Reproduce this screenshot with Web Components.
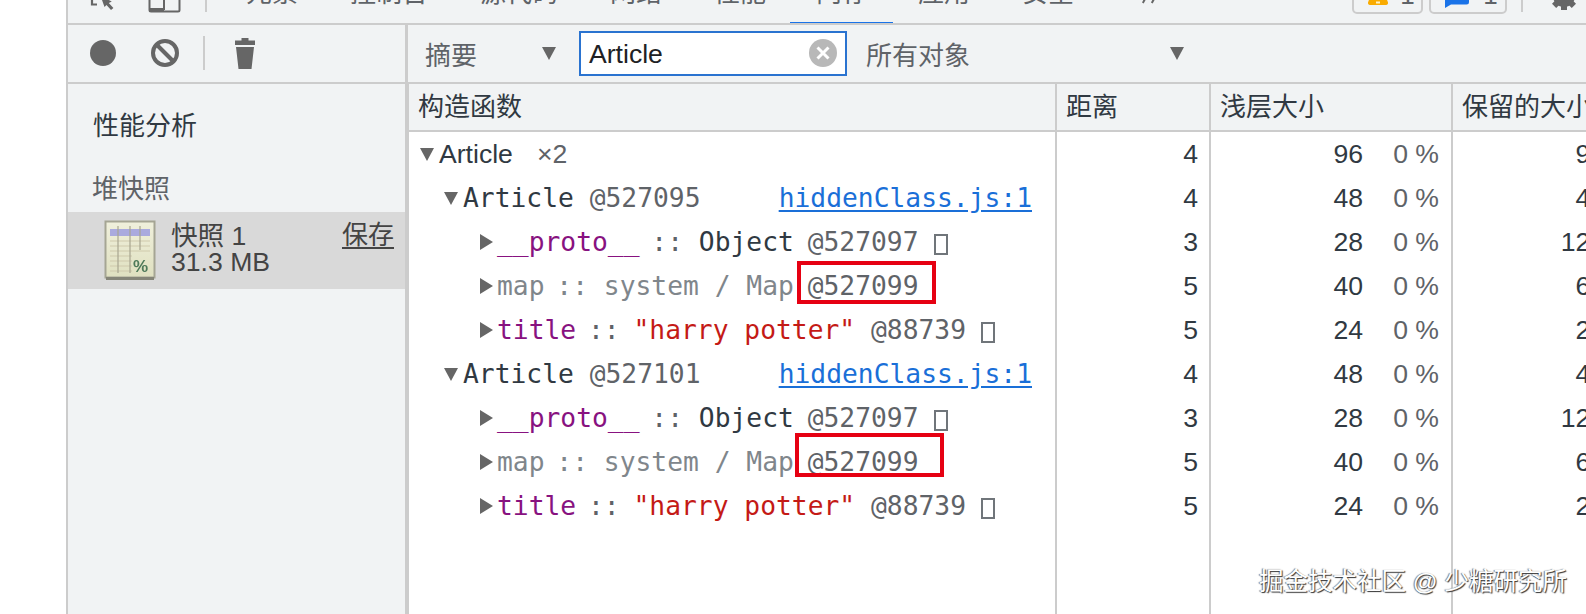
<!DOCTYPE html>
<html lang="zh">
<head>
<meta charset="utf-8">
<title>内存</title>
<style>
html, body {
  margin: 0;
  height: 614px;
  overflow: hidden;
  background: #fff;
  font-family: "Liberation Sans", "Noto Sans CJK SC", sans-serif;
}
body { position: relative; }

/* parts of a heap row, passed in through the slot */
.mono { font-family: "DejaVu Sans Mono", "Noto Sans CJK SC", monospace; font-size: 26.300px; }
.name { color: #303942; }
.id { color: #5f6368; }
.proto { color: #881280; }
.sys { color: #80868b; }
.key { color: #881280; }
.sep { color: #5f6368; }
.str { color: #c41a16; }
.times { color: #5f6368; margin-left: 24px; }
.tight { margin-left: -4px; }
.after { margin-left: -2px; }
.tofu {
  display: inline-block;
  width: 10px;
  height: 17px;
  margin-left: 15px;
  border: 2px solid #70757a;
  vertical-align: -4px;
}
</style>
</head>
<body>

<template id="shell-tpl">
  <style>
    :host {
      display: flex;
      flex-direction: column;
      height: 614px;
      margin-left: 66px;
      border-left: 2px solid #ccc;
      background: #f1f3f4;
      overflow: hidden;
    }
    .main { flex: 1; display: grid; grid-template-columns: 340px 1fr; min-height: 0; }
    .side { border-right: 3px solid #ccc; min-width: 0; }
    .work { display: flex; flex-direction: column; min-width: 0; }
  </style>
  <slot name="tabs"></slot>
  <div class="main">
    <div class="side"><slot name="side"></slot></div>
    <div class="work"><slot></slot></div>
  </div>
</template>

<template id="tabbar-tpl">
  <style>
    :host {
      display: flex;
      align-items: flex-start;
      box-sizing: border-box;
      height: 25px;
      padding-left: 22px;
      border-bottom: 2px solid #ccc;
      overflow: hidden;
      color: #5f6368;
      font-size: 26px;
    }
    svg { display: block; flex: none; }
    .inspect { margin-right: 28px; }
    .rule { flex: none; width: 2px; height: 12px; margin: 0 13px 0 24px; background: #ccc; }
    .more { margin-left: 42px; }
    .counts { display: flex; margin-left: 195px; }
    .count {
      box-sizing: border-box;
      display: flex;
      height: 24px;
      margin-top: -10px;
      border: 2px solid #ccc;
      border-radius: 5px;
      line-height: 24px;
    }
    .count svg { margin-top: 8px; }
    .count span { margin-top: -9px; }
    .warn { width: 71px; margin-right: 6px; padding-left: 14px; }
    .warn span { margin-left: 12px; }
    .msg { width: 78px; padding-left: 14px; }
    .msg span { margin-left: 14px; }
    .rule2 { flex: none; width: 2px; height: 12px; margin: 0 27px 0 14px; background: #ccc; }
  </style>
  <svg class="inspect" width="30" height="12" viewBox="0 0 30 12">
    <path d="M2 0v4.500h5" fill="none" stroke="#666" stroke-width="2.200"/>
    <path d="M12 0l2.500 7 2-2 4.500 5 2.400-2-4.600-5 3-1.600-3-1.400z" fill="#666"/>
  </svg>
  <svg width="33" height="13" viewBox="0 0 33 13">
    <path d="M1.500 0v10a1.500 1.500 0 0 0 1.500 1.500h27a1.500 1.500 0 0 0 1.500-1.500V0" fill="none" stroke="#666" stroke-width="2"/>
    <rect x="1" y="8" width="15" height="4" fill="#666"/>
    <rect x="15" y="0" width="2" height="10" fill="#666"/>
  </svg>
  <div class="rule"></div>
  <slot></slot>
  <svg class="more" width="15" height="4" viewBox="0 0 15 4">
    <path d="M3 -1L0.800 3M12 -1L9.800 3" fill="none" stroke="#666" stroke-width="2"/>
  </svg>
  <div class="counts">
    <div class="count warn">
      <svg width="20" height="5" viewBox="0 0 20 5"><path d="M2 -3h16l2 5.500a2 2 0 0 1-2 2.500H2a2 2 0 0 1-2-2.500z" fill="#f9ab00"/><rect x="8" y="1.500" width="4" height="2" fill="#fff3c8"/></svg>
      <span>1</span>
    </div>
    <div class="count msg">
      <svg width="24" height="8" viewBox="0 0 24 8"><path d="M0 -3h24v5a2.500 2.500 0 0 1-2.500 2.500H6L0 8z" fill="#1a73e8"/></svg>
      <span>1</span>
    </div>
  </div>
  <div class="rule2"></div>
  <svg width="28" height="11" viewBox="0 0 28 11">
    <g fill="#666" transform="translate(14 -4)">
      <circle r="11"/>
      <rect x="-3" y="-14" width="6" height="28"/>
      <rect x="-3" y="-14" width="6" height="28" transform="rotate(45)"/>
      <rect x="-3" y="-14" width="6" height="28" transform="rotate(90)"/>
      <rect x="-3" y="-14" width="6" height="28" transform="rotate(135)"/>
    </g>
  </svg>
</template>

<template id="tab-tpl">
  <style>
    :host {
      display: block;
      flex: none;
      box-sizing: border-box;
      height: 23px;
      padding: 0 26px;
      white-space: nowrap;
    }
    :host([active]) { margin-left: -2px; margin-right: -1px; padding: 0 25px 0 26px; box-shadow: inset 0 -3px #1a73e8; height: 25px; }
    div { margin-top: -20px; line-height: 26px; }
  </style>
  <div><slot></slot></div>
</template>

<template id="side-tpl">
  <style>
    :host { display: block; }
    .bar {
      display: flex;
      align-items: center;
      box-sizing: border-box;
      height: 59px;
      padding: 0 0 1px 22px;
      border-bottom: 2px solid #ccc;
    }
    svg { display: block; flex: none; }
    .clear { margin-left: 35px; }
    .rule { width: 2px; height: 34px; margin: 0 30px 0 24px; background: #ccc; }
    .title { margin: 27px 0 0 25px; font-size: 26px; line-height: 30px; color: #303942; }
    .group { margin: 33px 0 8px 24px; font-size: 26px; line-height: 30px; color: #5f6368; }
  </style>
  <div class="bar">
    <svg width="26" height="26" viewBox="0 0 26 26"><circle cx="13" cy="13" r="13" fill="#666"/></svg>
    <svg class="clear" width="28" height="28" viewBox="0 0 28 28"><circle cx="14" cy="14" r="12" fill="none" stroke="#666" stroke-width="4"/><path d="M6 6l16 16" stroke="#666" stroke-width="4"/></svg>
    <div class="rule"></div>
    <svg width="20" height="31" viewBox="0 0 20 31"><path d="M6.500 2.500V0h7v2.500H20V7H0V2.500zM1 9h18l-2.500 22h-13z" fill="#666"/></svg>
  </div>
  <div class="title">性能分析</div>
  <div class="group">堆快照</div>
  <slot></slot>
</template>

<template id="snapshot-tpl">
  <style>
    :host {
      display: flex;
      box-sizing: border-box;
      height: 77px;
      padding-left: 36px;
      background: #d9d9d9;
      color: #444;
      font-size: 26.600px;
      line-height: 26px;
    }
    svg { display: block; flex: none; margin-top: 8px; filter: blur(.6px); }
    .info { margin: 11px 0 0 15px; flex: 1; }
    .save { margin: 10px 11px 0 0; font-size: 26px; text-decoration: underline; text-underline-offset: 3px; }
  </style>
  <svg width="52" height="61" viewBox="0 0 52 61">
    <defs>
      <linearGradient id="sheet" x1="0" y1="0" x2="0" y2="1">
        <stop offset="0" stop-color="#f0f0dc"/>
        <stop offset="1" stop-color="#dfe0c0"/>
      </linearGradient>
    </defs>
    <rect x="1.500" y="1.500" width="49" height="56" fill="url(#sheet)" stroke="#a5a594" stroke-width="2"/>
    <rect x="2" y="57" width="48" height="3" fill="#858578"/>
    <rect x="6" y="9" width="40" height="7" fill="#aaaade"/>
    <g stroke="#cfc9ab" stroke-width="1.200">
      <path d="M6 21h40M6 26h40M6 31h40M6 36h22M6 41h22M6 46h22M6 51h22"/>
    </g>
    <path d="M14 6v47M26 6v47M36 6v24" stroke="#a8a690" stroke-width="1.200"/>
    <text x="29" y="52" font-family="Liberation Sans, sans-serif" font-size="17" font-weight="700" fill="#4f7a5a">%</text>
  </svg>
  <div class="info"><slot></slot></div>
  <div class="save">保存</div>
</template>

<template id="filter-tpl">
  <style>
    :host {
      display: flex;
      align-items: center;
      box-sizing: border-box;
      height: 59px;
      padding: 0 0 1px 17px;
      border-bottom: 2px solid #ccc;
      color: #5f6368;
      font-size: 26px;
    }
    i { flex: none; width: 0; height: 0; border: 7px solid transparent; border-top: 13px solid #666; border-bottom: 0; }
    .a1 { margin-left: 65px; }
    .search {
      flex: none;
      display: flex;
      align-items: center;
      justify-content: space-between;
      box-sizing: border-box;
      width: 268px;
      height: 45px;
      margin: 0 19px 0 23px;
      padding: 0 8px;
      border: 2px solid #2a73d0;
      background: #fff;
      color: #202124;
      font-size: 26.600px;
    }
    .search span { padding-top: 3px; }
    .a2 { margin-left: 200px; }
    svg { display: block; }
  </style>
  <span>摘要</span>
  <i class="a1"></i>
  <div class="search">
    <span>Article</span>
    <svg width="28" height="28" viewBox="0 0 28 28"><circle cx="14" cy="14" r="14" fill="#b8b8b8"/><path d="M8.500 8.500l11 11M19.500 8.500l-11 11" stroke="#fff" stroke-width="3"/></svg>
  </div>
  <span>所有对象</span>
  <i class="a2"></i>
</template>

<template id="table-tpl">
  <style>
    :host {
      display: flex;
      flex-direction: column;
      flex: 1;
      min-height: 0;
      border-left: 1px solid #ccc;
      background: #fff;
      overflow: hidden;
    }
    .head {
      display: grid;
      grid-template-columns: 646px 154px 242px 320px;
      box-sizing: border-box;
      height: 48px;
      border-bottom: 2px solid #ccc;
      background: #f1f3f4;
      color: #303942;
      font-size: 26px;
      line-height: 47px;
    }
    .head div { padding-left: 9px; white-space: nowrap; }
    .head div + div { border-left: 2px solid #ccc; }
  </style>
  <div class="head">
    <div>构造函数</div><div>距离</div><div>浅层大小</div><div>保留的大小</div>
  </div>
  <slot></slot>
</template>

<template id="row-tpl">
  <style>
    :host {
      display: grid;
      grid-template-columns: 646px 154px 242px 320px;
      height: 44px;
      color: #303942;
      font-size: 26.600px;
      line-height: 44px;
    }
    :host([fill]) { flex: 1; }
    .c { display: flex; box-sizing: border-box; white-space: nowrap; }
    .c + .c { border-left: 2px solid #ccc; justify-content: flex-end; }
    .tree { align-items: center; padding-right: 23px; }
    .tw { flex: none; width: 0; height: 0; border-style: solid; border-color: transparent; }
    :host([open]) .tw { margin-right: 5px; border-width: 13px 7.500px 0; border-top-color: #666; }
    :host([closed]) .tw { margin-right: 4px; border-width: 8px 0 8px 13px; border-left-color: #666; }
    :host([fill]) .tw { display: none; }
    .dist { padding-right: 11px; }
    .size { padding-right: 12px; }
    .size b { font-weight: 400; width: 76px; text-align: right; color: #5f6368; }
    .keep { padding-right: 166px; }
  </style>
  <div class="c tree"><div class="tw"></div><slot></slot></div>
  <div class="c dist"></div>
  <div class="c size"><span class="sv"></span><b></b></div>
  <div class="c keep"></div>
</template>

<template id="mark-tpl">
  <style>
    :host { position: absolute; box-sizing: border-box; border: 4px solid #e60012; }
  </style>
</template>

<template id="mark-text-tpl">
  <style>
    :host {
      position: absolute;
      right: 19px;
      bottom: 17px;
      color: #fff;
      font-size: 24.500px;
      line-height: 30px;
      white-space: nowrap;
      text-shadow: 1px 1px 1px #333, -1px 0 1px #777;
    }
  </style>
  <slot></slot>
</template>

<dev-shell>
  <dev-tabbar slot="tabs">
    <dev-tab>元素</dev-tab>
    <dev-tab>控制台</dev-tab>
    <dev-tab>源代码</dev-tab>
    <dev-tab>网络</dev-tab>
    <dev-tab>性能</dev-tab>
    <dev-tab active>内存</dev-tab>
    <dev-tab>应用</dev-tab>
    <dev-tab>安全</dev-tab>
  </dev-tabbar>

  <profile-side slot="side">
    <snapshot-item>快照 1<br>31.3 MB</snapshot-item>
  </profile-side>

  <heap-filter></heap-filter>
  <heap-table>
    <heap-row open indent="11" dist="4" size="96" keep="96"><span class="name">Article</span><span class="times">×2</span></heap-row>
    <heap-row open indent="35" dist="4" size="48" keep="48"><span class="mono"><span class="name">Article</span> <span class="id">@527095</span></span><a-link>hiddenClass.js:1</a-link></heap-row>
    <heap-row closed indent="71" dist="3" size="28" keep="128"><span class="mono"><span class="proto">__proto__</span> <span class="sep tight">::</span> <span class="name">Object</span> <span class="id after">@527097</span><span class="tofu"></span></span></heap-row>
    <heap-row closed indent="71" dist="5" size="40" keep="64"><span class="mono"><span class="sys">map <span class="tight">:: system / Map</span></span> <span class="id after">@527099</span></span></heap-row>
    <heap-row closed indent="71" dist="5" size="24" keep="24"><span class="mono"><span class="key">title</span> <span class="sep tight">::</span> <span class="str after">"harry potter"</span> <span class="id">@88739</span><span class="tofu"></span></span></heap-row>
    <heap-row open indent="35" dist="4" size="48" keep="48"><span class="mono"><span class="name">Article</span> <span class="id">@527101</span></span><a-link>hiddenClass.js:1</a-link></heap-row>
    <heap-row closed indent="71" dist="3" size="28" keep="128"><span class="mono"><span class="proto">__proto__</span> <span class="sep tight">::</span> <span class="name">Object</span> <span class="id after">@527097</span><span class="tofu"></span></span></heap-row>
    <heap-row closed indent="71" dist="5" size="40" keep="64"><span class="mono"><span class="sys">map <span class="tight">:: system / Map</span></span> <span class="id after">@527099</span></span></heap-row>
    <heap-row closed indent="71" dist="5" size="24" keep="24"><span class="mono"><span class="key">title</span> <span class="sep tight">::</span> <span class="str after">"harry potter"</span> <span class="id">@88739</span><span class="tofu"></span></span></heap-row>
    <heap-row fill></heap-row>
  </heap-table>
</dev-shell>

<mark-box x="797" y="261" w="139" h="43"></mark-box>
<mark-box x="795" y="433" w="149" h="44"></mark-box>
<mark-text>掘金技术社区 @ 少糖研究所</mark-text>

<script>
// plain elements: just stamp their template into an open shadow root
class TemplateElement extends HTMLElement {
  static tpl = "";
  constructor() {
    super();
    this.attachShadow({ mode: "open" });
    const tpl = document.getElementById(this.constructor.tpl);
    this.shadowRoot.appendChild(tpl.content.cloneNode(true));
  }
}

const plain = {
  "dev-shell": "shell-tpl",
  "dev-tabbar": "tabbar-tpl",
  "dev-tab": "tab-tpl",
  "profile-side": "side-tpl",
  "snapshot-item": "snapshot-tpl",
  "heap-filter": "filter-tpl",
  "heap-table": "table-tpl",
  "mark-text": "mark-text-tpl",
};
for (const [name, tpl] of Object.entries(plain)) {
  customElements.define(name, class extends TemplateElement { static tpl = tpl; });
}

class HeapRow extends TemplateElement {
  static tpl = "row-tpl";
  connectedCallback() {
    const root = this.shadowRoot;
    root.querySelector(".tree").style.paddingLeft = `${this.getAttribute("indent") || 0}px`;
    root.querySelector(".dist").textContent = this.getAttribute("dist") || "";
    root.querySelector(".sv").textContent = this.getAttribute("size") || "";
    root.querySelector(".keep").textContent = this.getAttribute("keep") || "";
    if (this.hasAttribute("size")) root.querySelector(".size b").textContent = "0 %";
  }
}
customElements.define("heap-row", HeapRow);

class SourceLink extends HTMLElement {
  constructor() {
    super();
    this.attachShadow({ mode: "open" }).innerHTML = `
      <style>
        :host {
          margin-left: auto;
          color: #1a6fd8;
          font-family: "DejaVu Sans Mono", monospace;
          font-size: 26.300px;
          text-decoration: underline;
          text-underline-offset: 3px;
        }
      </style><slot></slot>`;
  }
}
customElements.define("a-link", SourceLink);

class MarkBox extends TemplateElement {
  static tpl = "mark-tpl";
  connectedCallback() {
    this.style.left = `${this.getAttribute("x")}px`;
    this.style.top = `${this.getAttribute("y")}px`;
    this.style.width = `${this.getAttribute("w")}px`;
    this.style.height = `${this.getAttribute("h")}px`;
  }
}
customElements.define("mark-box", MarkBox);
</script>
</body>
</html>
